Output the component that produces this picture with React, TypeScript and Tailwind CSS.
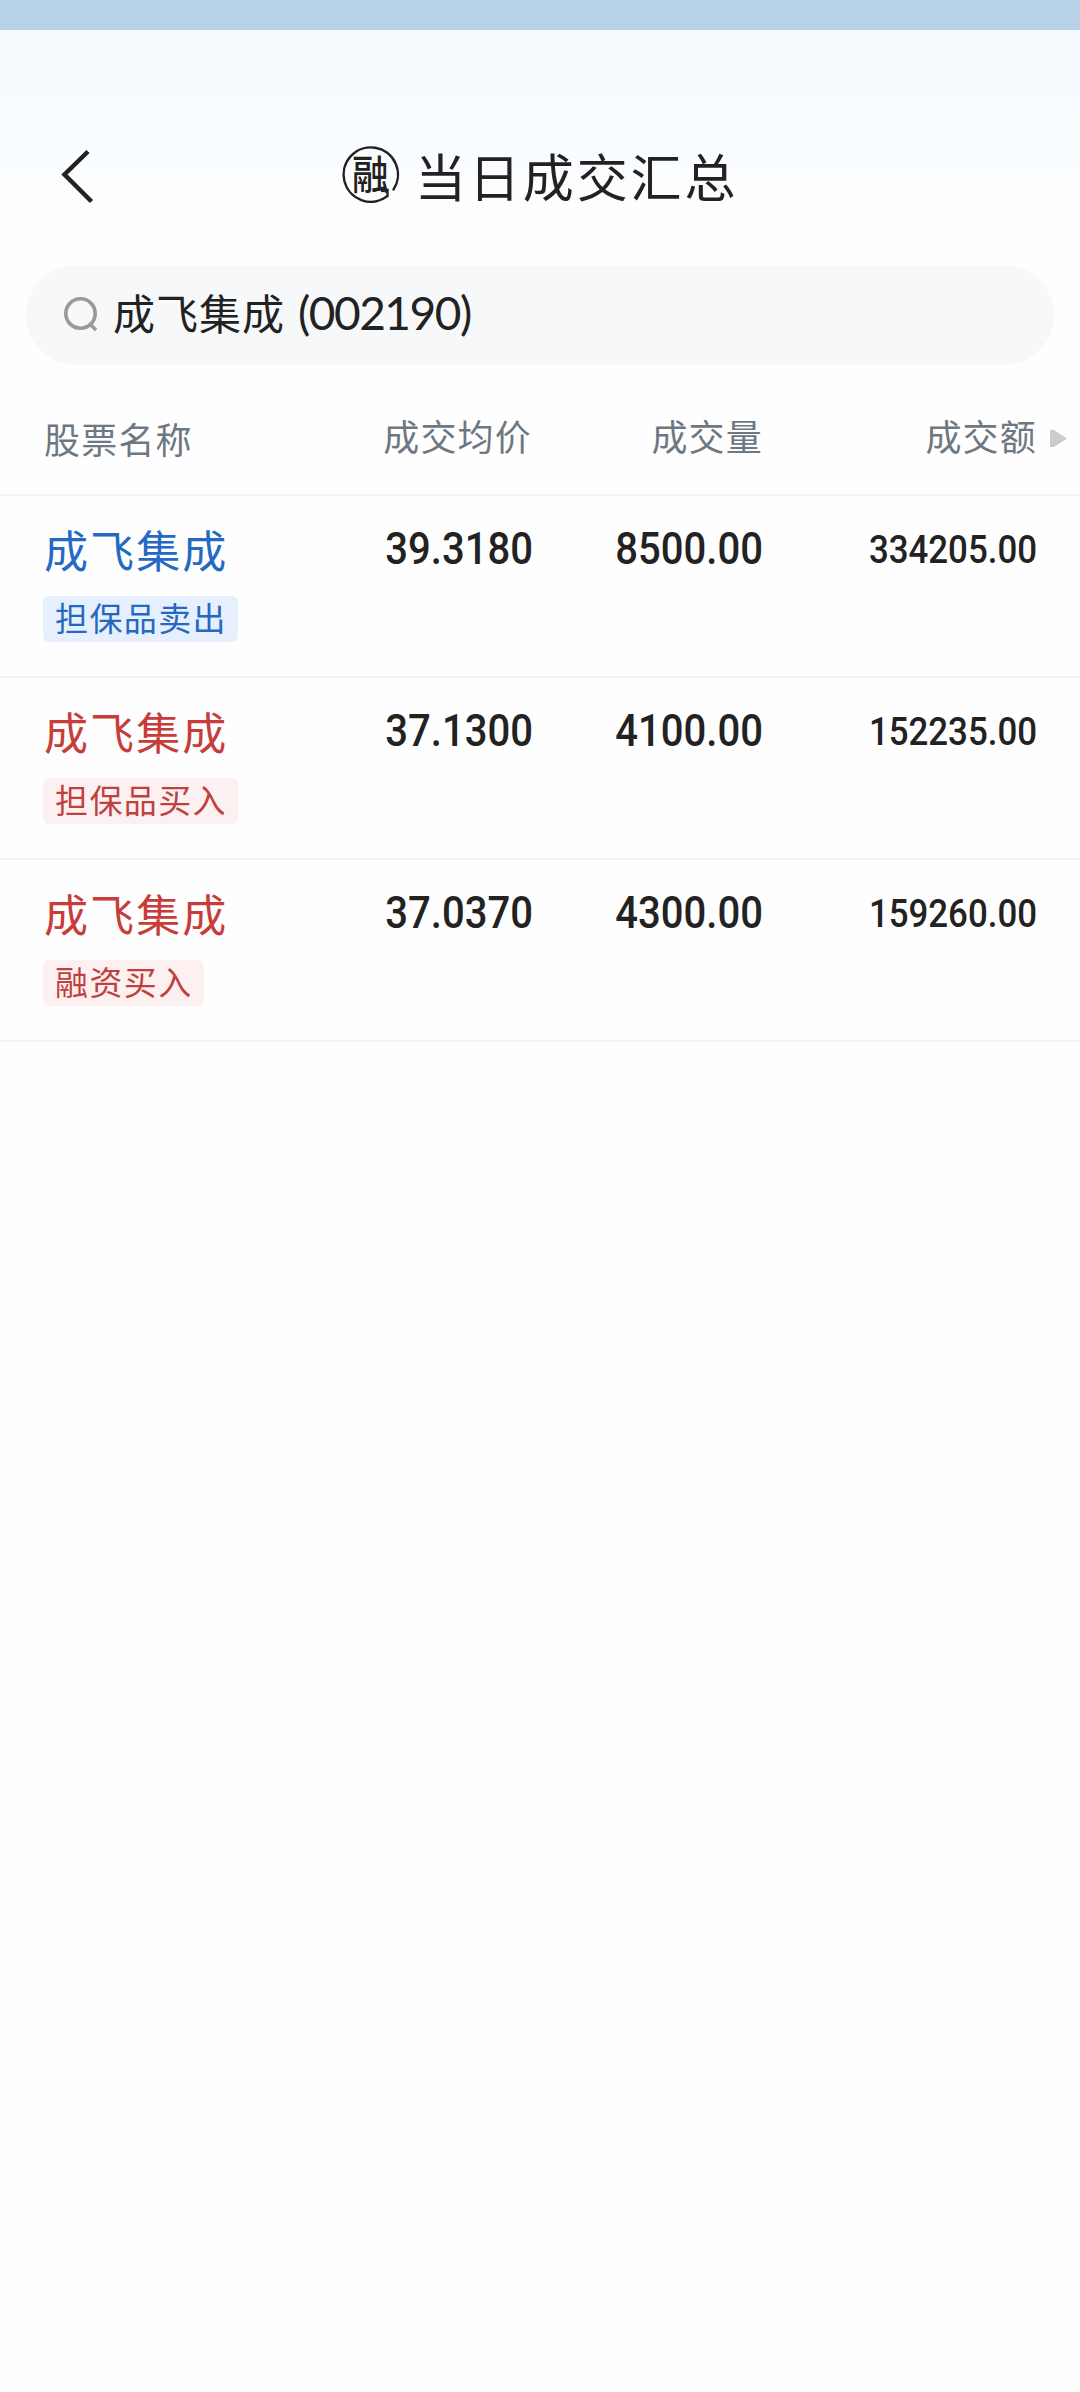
import React from 'react';
import clsx from 'clsx';

interface Trade {
  name: string;
  tag: string;
  side: 'buy' | 'sell';
  price: string;
  volume: string;
  amount: string;
}

const trades: Trade[] = [
  { name: '成飞集成', tag: '担保品卖出', side: 'sell', price: '39.3180', volume: '8500.00', amount: '334205.00' },
  { name: '成飞集成', tag: '担保品买入', side: 'buy', price: '37.1300', volume: '4100.00', amount: '152235.00' },
  { name: '成飞集成', tag: '融资买入', side: 'buy', price: '37.0370', volume: '4300.00', amount: '159260.00' },
];

function MarginLogo() {
  return (
    <svg
      className="overflow-visible"
      width="60"
      height="60"
      viewBox="0 0 60 60"
      fill="none"
      stroke="#222"
      strokeWidth="2.4"
      strokeLinecap="round"
    >
      <path d="M53.5 45.5A27.2 27.2 0 1 0 47.5 52V46L42 47" />
      <text
        transform="translate(30.5 45) scale(0.92 1)"
        textAnchor="middle"
        fontSize="40"
        fill="#222"
        stroke="none"
        className="font-['Noto_Sans_CJK_SC',sans-serif] font-medium"
      >
        融
      </text>
    </svg>
  );
}

function Header() {
  return (
    <header className="relative h-[235px] pt-[114px] bg-linear-to-b from-[#f5f9fe] via-[#f9fcff] via-50% to-[#fefefe] to-90%">
      <button className="absolute left-[60px] top-[116px]" aria-label="返回">
        <svg width="36" height="60" viewBox="0 0 36 60" fill="none" stroke="#222" strokeWidth="4.5">
          <path d="M28 5.5L4.5 28.5L31.5 55.5" />
        </svg>
      </button>
      <div className="flex h-[60px] items-center pl-[340px]">
        <MarginLogo />
        <h1 className="ml-[15px] pt-px text-[51px] leading-[60px] tracking-[2.9px] whitespace-nowrap">当日成交汇总</h1>
      </div>
    </header>
  );
}

function SearchBar() {
  return (
    <div className="mx-[26px] flex h-[100px] items-center rounded-full bg-[#f7f8fa] pb-[6px] pl-[37px]">
      <svg className="mt-[6px]" width="36" height="36" viewBox="0 0 36 36" fill="none" stroke="#999" strokeWidth="3.6">
        <circle cx="17.5" cy="16.5" r="14.7" />
        <path d="M27.5 27.5L33 33" />
      </svg>
      <div className="ml-[14px] flex items-baseline whitespace-nowrap">
        <span className="text-[42px] leading-[50px] tracking-[1px]">成飞集成</span>
        <span className="ml-[13px] font-['Lato',sans-serif] text-[46px] leading-[50px] tracking-[-1.5px]">(002190)</span>
      </div>
    </div>
  );
}

function TableHead() {
  return (
    <div className="relative grid h-[131px] grid-cols-[266px_222px_231px_274px] border-b-2 border-[#f3f3f4] pt-[51px] pl-[44px] text-[36px] leading-[38px] tracking-[1.2px] text-[#6d7882]">
      <span className="pt-[3px]">股票名称</span>
      <span className="text-right">成交均价</span>
      <span className="text-right">成交量</span>
      <span className="text-right">成交额</span>
      <svg className="absolute top-[65px] left-[1050px]" width="17" height="17" viewBox="0 0 17 17" fill="#ccc">
        <path d="M0 0H4L17 8.5L4 17H0Z" />
      </svg>
    </div>
  );
}

function TradeRow({ trade }: { trade: Trade }) {
  const sell = trade.side === 'sell';
  return (
    <div className="grid h-[182px] grid-cols-[268px_222px_230px_274px] border-b-2 border-[#f3f3f4] pt-[30px] pl-[43px]">
      <div>
        <div className={clsx('pt-px pl-px text-[44px] leading-[44px] tracking-[2.1px]', sell ? 'text-[#2469c4]' : 'text-[#c83c3a]')}>
          {trade.name}
        </div>
        <span
          className={clsx(
            'mt-[25px] inline-block h-[46px] rounded-md pr-[11px] pl-[12px] text-[33px] leading-[42px] tracking-[1.4px]',
            sell ? 'bg-[#e5effd] text-[#2469bf]' : 'bg-[#fdf0f0] text-[#c04040]',
          )}
        >
          {trade.tag}
        </span>
      </div>
      <Num>{trade.price}</Num>
      <Num>{trade.volume}</Num>
      <Num small>{trade.amount}</Num>
    </div>
  );
}

function Num({ children, small }: { children: string; small?: boolean }) {
  return (
    <span
      className={clsx(
        "origin-right text-right font-['Roboto',sans-serif] font-medium",
        small ? 'scale-x-[0.905] text-[38.5px] leading-[47px]' : 'scale-x-[0.89] text-[45px] leading-[45px]',
      )}
    >
      {children}
    </span>
  );
}

export default function App() {
  return (
    <div className="h-[2392px] w-[1080px] overflow-hidden bg-[#fefefe] font-['Noto_Sans_CJK_SC',sans-serif] text-[#222]">
      <div className="h-[30px] bg-[#b7d2e8]" />
      <Header />
      <SearchBar />
      <TableHead />
      {trades.map((trade) => (
        <TradeRow key={trade.price} trade={trade} />
      ))}
    </div>
  );
}
